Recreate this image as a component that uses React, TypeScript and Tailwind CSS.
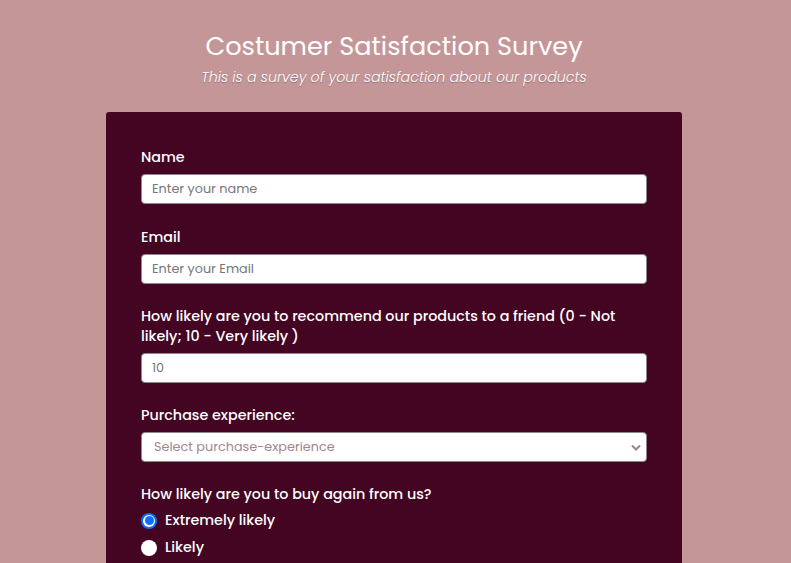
import React from "react";

const font = { fontFamily: "Poppins, 'Open Sans', sans-serif" };

function Label({ children, mb = "mb-[7px]" }: { children: React.ReactNode; mb?: string }) {
  return <div className={`text-[14.3px] leading-[20px] font-medium text-white ${mb}`}>{children}</div>;
}

function Field({ placeholder }: { placeholder: string }) {
  return (
    <div className="h-[30px] bg-white rounded-[4px] border border-[#8a8a8a] flex items-center px-[10px] text-[12.8px] text-[#777]">
      {placeholder}
    </div>
  );
}

function Radio({ checked, label }: { checked?: boolean; label: string }) {
  return (
    <div className="flex items-center h-[27px] gap-[8px]">
      {checked ? (
        <span className="w-[16px] h-[16px] rounded-full bg-[#0d6efd] flex items-center justify-center">
          <span className="w-[12px] h-[12px] rounded-full bg-white flex items-center justify-center">
            <span className="w-[9px] h-[9px] rounded-full bg-[#0d6efd]" />
          </span>
        </span>
      ) : (
        <span className="w-[16px] h-[16px] rounded-full bg-white" />
      )}
      <span className="text-[14.3px] font-medium text-white">{label}</span>
    </div>
  );
}

export default function App() {
  return (
    <div className="h-[563px] overflow-hidden bg-[#c49698] flex flex-col items-center pr-[3px]" style={font}>
      <h1 className="mt-[28px] text-[25.6px] leading-[36px] text-white">Costumer Satisfaction Survey</h1>
      <p className="mt-[3px] text-[14.2px] leading-[20px] italic font-light text-white [text-shadow:0_1px_1px_rgba(0,0,0,0.25)]">
        This is a survey of your satisfaction about our products
      </p>
      <div className="mt-[25px] w-[576px] flex-1 bg-[#430522] rounded-t-[3px] px-[35px] pt-[35px]">
        <Label>Name</Label>
        <Field placeholder="Enter your name" />
        <div className="h-[23px]" />
        <Label>Email</Label>
        <Field placeholder="Enter your Email" />
        <div className="h-[22px]" />
        <Label>
          How likely are you to recommend our products to a friend (0 - Not likely; 10 - Very likely )
        </Label>
        <Field placeholder="10" />
        <div className="h-[22px]" />
        <Label>Purchase experience:</Label>
        <div className="h-[30px] bg-white rounded-[4px] border border-[#8a8a8a] flex items-center justify-between pl-[12px] pr-[5px] text-[12.8px] text-[#a58592]">
          <span>Select purchase-experience</span>
          <svg width="10" height="7" viewBox="0 0 10 7">
            <path d="M1 1.5 L5 5.5 L9 1.5" fill="none" stroke="#a58592" strokeWidth="2.2" />
          </svg>
        </div>
        <div className="h-[22px]" />
        <Label mb="mb-[3px]">How likely are you to buy again from us?</Label>
        <Radio checked label="Extremely likely" />
        <Radio label="Likely" />
      </div>
    </div>
  );
}
